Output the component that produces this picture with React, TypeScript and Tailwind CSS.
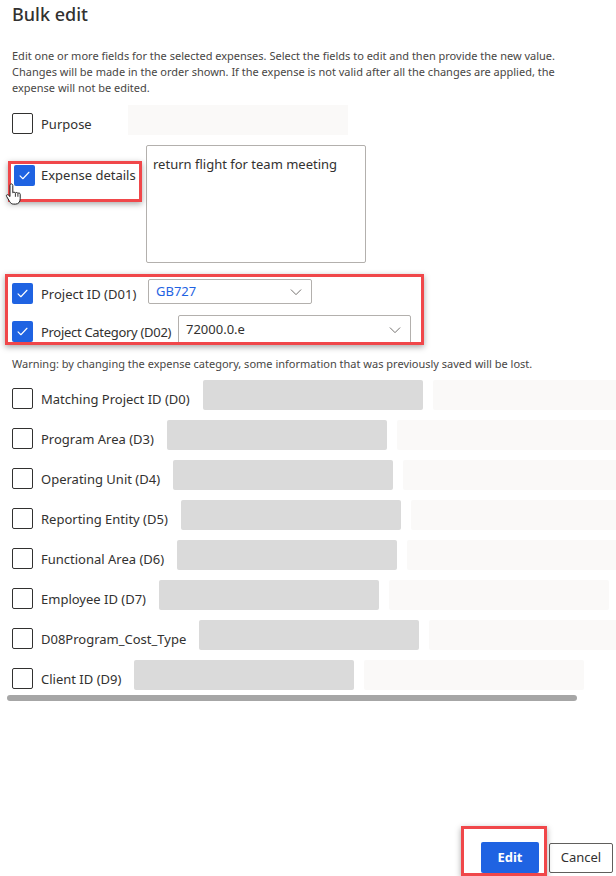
import React from "react";

const font = { fontFamily: '"Noto Sans", "Open Sans", sans-serif' };

interface CheckProps {
  checked?: boolean;
  className?: string;
}

const Check: React.FC<CheckProps> = ({ checked, className = "" }) => {
  if (checked) {
    return (
      <div
        className={`flex h-[21px] w-[21px] shrink-0 items-center justify-center rounded-[2px] bg-[#1f63e2] ${className}`}
      >
        <svg width="13" height="13" viewBox="0 0 16 16" fill="none">
          <path d="M2.5 8.5l3.5 3.5 7.5-8" stroke="#fff" strokeWidth="1.4" strokeLinecap="round" strokeLinejoin="round" />
        </svg>
      </div>
    );
  }
  return (
    <div className={`h-[21px] w-[21px] shrink-0 rounded-[2px] border border-[#323130] bg-white ${className}`} />
  );
};

const Chevron = () => (
  <svg width="14" height="14" viewBox="0 0 16 16" fill="none">
    <path d="M2.5 5.5l5.5 5.5 5.5-5.5" stroke="#605e5c" strokeWidth="1" strokeLinecap="round" strokeLinejoin="round" />
  </svg>
);

// mouse pointer left in the screenshot
const Cursor = () => (
  <svg width="20" height="26" viewBox="0 0 20 26" fill="none">
    <path
      d="M5 3.5c0-1 .7-1.6 1.4-1.6S7.8 2.5 7.8 3.5v7.3c.3-.8 2.5-.8 2.6.3.4-.9 2.4-.8 2.5.4.5-.8 2.3-.6 2.3.8v4.5c0 3-1.7 5.3-4.6 5.3H8.6c-2 0-3-1-4-2.6L1.6 14.4c-.7-1.2.6-2.3 1.7-1.4L5 14.6V3.5z"
      fill="#fff"
      stroke="#222"
      strokeWidth="1"
      strokeLinejoin="round"
    />
    <path d="M10.4 11.2v3.6M12.9 11.6v3.2" stroke="#222" strokeWidth="0.9" />
  </svg>
);

const rows = [
  "Matching Project ID (D0)",
  "Program Area (D3)",
  "Operating Unit (D4)",
  "Reporting Entity (D5)",
  "Functional Area (D6)",
  "Employee ID (D7)",
  "D08Program_Cost_Type",
  "Client ID (D9)",
];

export default function App() {
  return (
    <div className="relative h-[876px] w-[616px] overflow-hidden bg-white text-[#323130]" style={font}>
      <h1 className="px-3 pt-[1px] text-[18px] font-medium leading-[26px]">Bulk edit</h1>

      <p className="mt-[21px] px-3 text-[11px] leading-[16px] text-[#484644]">
        Edit one or more fields for the selected expenses. Select the fields to edit and then provide the new value.
        <br />
        Changes will be made in the order shown. If the expense is not valid after all the changes are applied, the
        <br />
        expense will not be edited.
      </p>

      {/* Purpose */}
      <div className="mt-[9px] flex h-[30px] items-start px-3">
        <Check className="mt-[8px]" />
        <span className="ml-[8px] mt-[9px] w-[87px] text-[13px] leading-[20px]">Purpose</span>
        <div className="h-[30px] w-[220px] bg-[#faf9f8]" />
      </div>

      {/* Expense details */}
      <div className="relative mt-[10px] flex items-start px-3">
        <Check checked className="ml-[2px] mt-[20px]" />
        <span className="ml-[6px] mt-[20px] w-[105px] text-[13px] leading-[20px]">Expense details</span>
        <div className="h-[118px] w-[220px] rounded-[2px] border border-[#b3b0ad] px-[6px] py-[9px] text-[13px] leading-[18px]">
          return flight for team meeting
        </div>
        <div className="absolute left-[8px] top-[16px] h-[41px] w-[134px] border-[3px] border-[#f0474a] shadow-[0_2px_6px_rgba(0,0,0,0.35)]" />
        <div className="absolute left-[5px] top-[37px]">
          <Cursor />
        </div>
      </div>

      {/* Project rows */}
      <div className="relative mt-[16px] px-3">
        <div className="flex h-[30px] items-start">
          <Check checked className="mt-[4px]" />
          <span className="ml-[8px] mt-[5px] w-[107px] text-[13px] leading-[20px]">Project ID (D01)</span>
          <div className="flex h-[25px] w-[164px] items-center justify-between rounded-[2px] border border-[#b3b0ad] pl-[7px] pr-[8px] text-[13px] text-[#1f63e2]">
            <span>GB727</span>
            <Chevron />
          </div>
        </div>
        <div className="mt-[6px] flex h-[30px] items-start">
          <Check checked className="mt-[6px]" />
          <span className="ml-[8px] mt-[7px] w-[137px] whitespace-nowrap text-[13px] leading-[20px] tracking-[-0.3px]">
            Project Category (D02)
          </span>
          <div className="flex h-[30px] w-[233px] items-center justify-between rounded-[2px] border border-[#b3b0ad] pl-[7px] pr-[8px] text-[13px]">
            <span>72000.0.e</span>
            <Chevron />
          </div>
        </div>
        <div className="absolute left-[5px] top-[-5px] h-[71px] w-[419px] border-[3px] border-[#f0474a] shadow-[0_2px_6px_rgba(0,0,0,0.35)]" />
      </div>

      <p className="mt-[11px] px-3 text-[11px] leading-[16px] text-[#484644]">
        Warning: by changing the expense category, some information that was previously saved will be lost.
      </p>

      {/* Remaining fields */}
      <div className="mt-[8px] flex flex-col gap-[10px] px-3">
        {rows.map((label) => (
          <div key={label} className="flex h-[30px] shrink-0 items-start whitespace-nowrap">
            <Check className="mt-[8px]" />
            <span className="ml-[8px] mt-[9px] text-[13px] leading-[20px]">{label}</span>
            <div className="ml-[13px] h-[30px] w-[220px] shrink-0 rounded-[2px] bg-[#dadada]" />
            <div className="ml-[10px] h-[30px] w-[220px] shrink-0 rounded-[2px] bg-[#faf9f8]" />
          </div>
        ))}
      </div>

      {/* horizontal scrollbar */}
      <div className="ml-[7px] mt-[5px] h-[6px] w-[570px] rounded-full bg-[#a6a6a6]" />

      {/* footer */}
      <div className="absolute bottom-[3px] right-[3px] flex items-center gap-[10px]">
        <div className="relative">
          <button className="h-[31px] w-[58px] rounded-[2px] bg-[#1f63e2] text-[13px] font-bold text-white">Edit</button>
          <div className="absolute bottom-[-3px] left-[-20px] right-[-8px] top-[-16px] border-[3px] border-[#f0474a] shadow-[0_2px_6px_rgba(0,0,0,0.35)]" />
        </div>
        <button className="h-[30px] w-[64px] rounded-[2px] border border-[#605e5c] bg-white text-[13px] text-[#323130]">
          Cancel
        </button>
      </div>
    </div>
  );
}
